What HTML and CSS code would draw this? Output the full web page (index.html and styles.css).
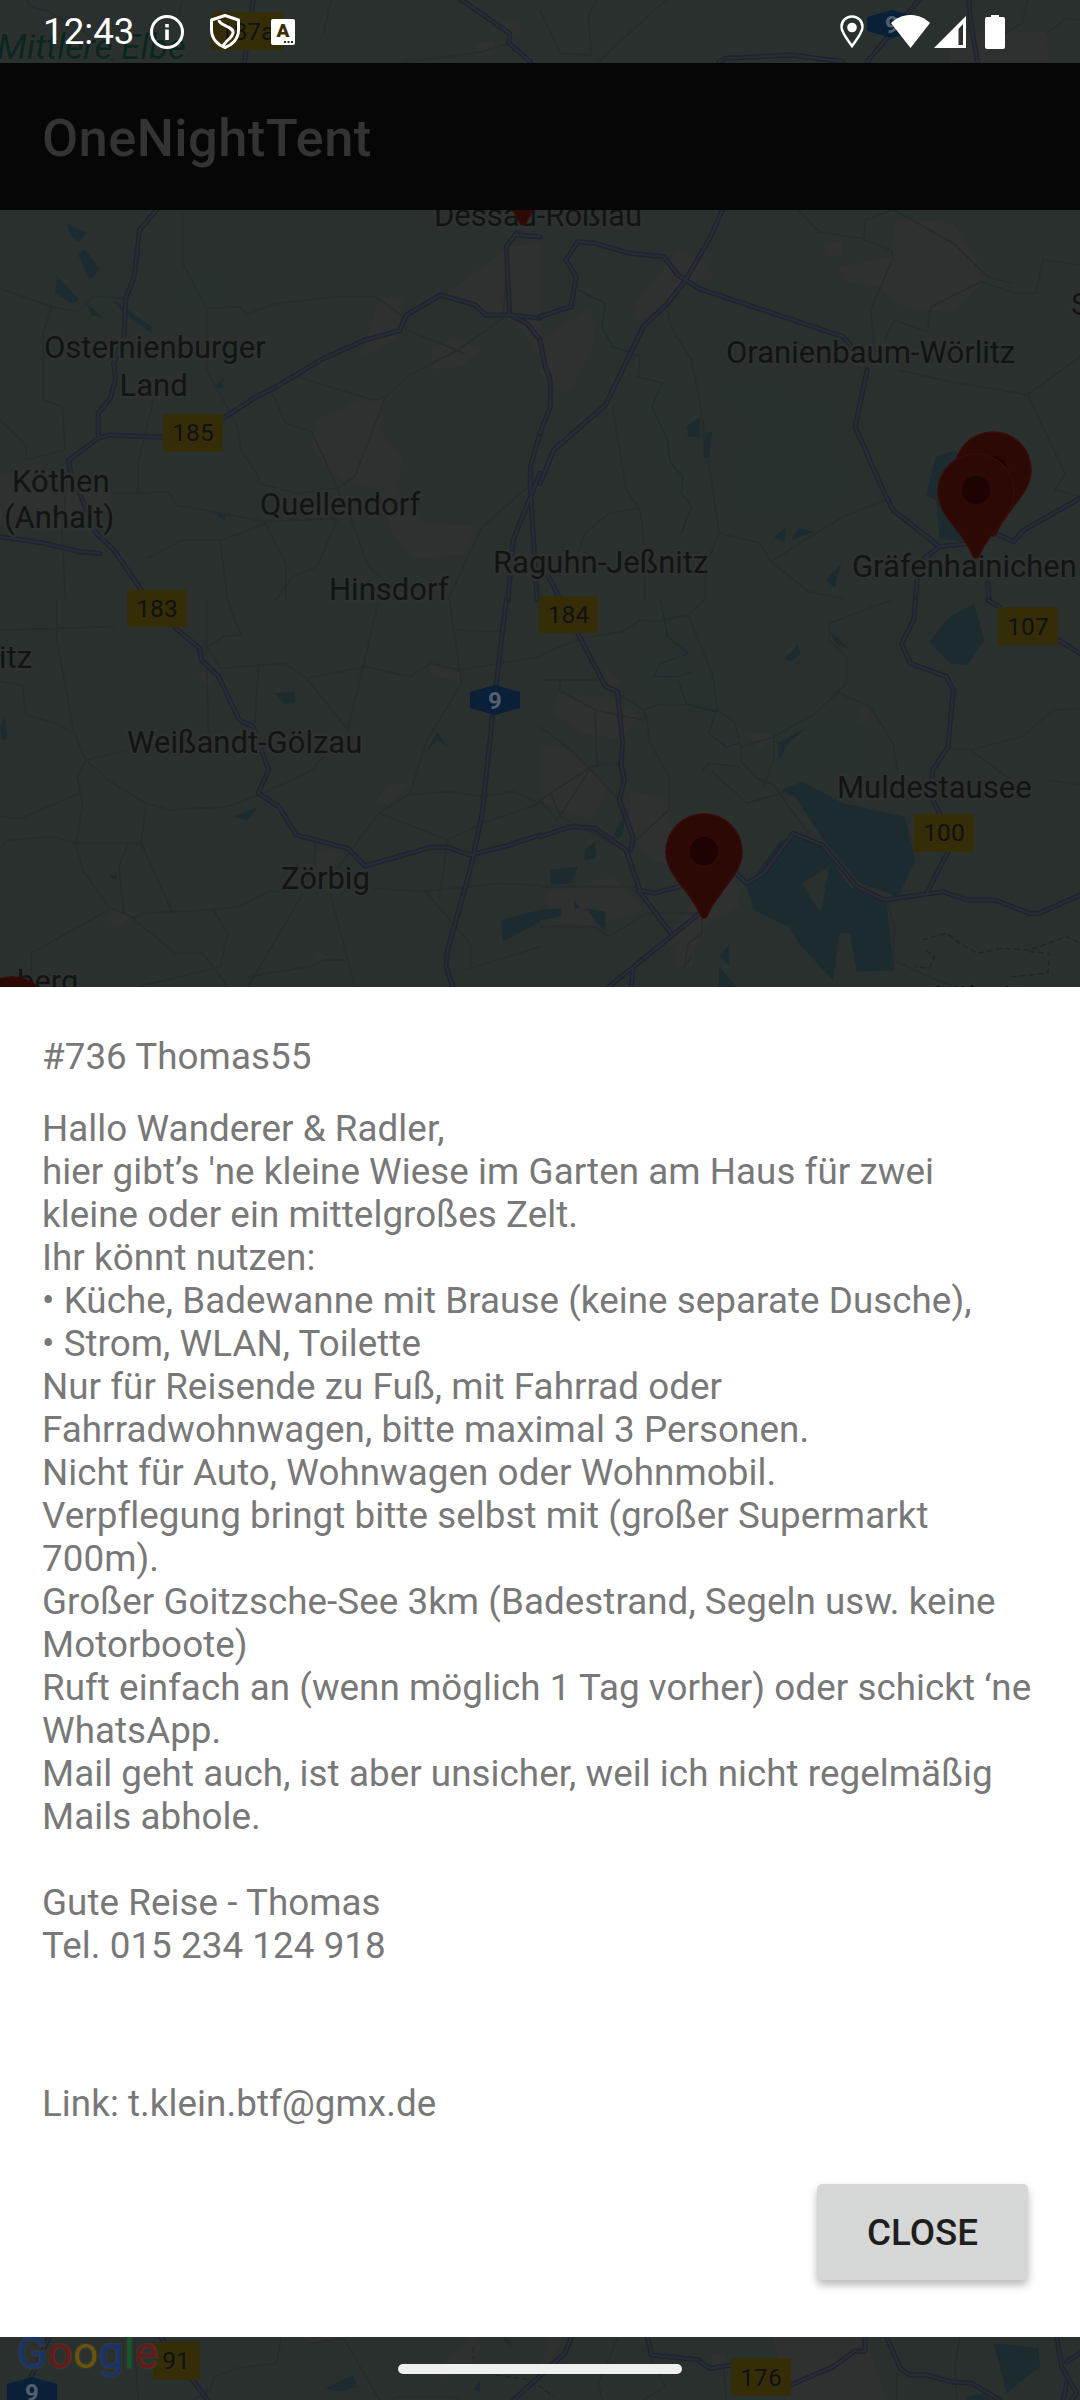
FILE: index.html
```html
<!DOCTYPE html>
<html lang="de">
<head>
<meta charset="utf-8">
<title>OneNightTent</title>
<link rel="stylesheet" href="styles.css">
</head>
<body>
<div class="screen">
<svg class="map" width="1080" height="2400" viewBox="0 0 1080 2400">
<defs>
<path id="pin" d="M0 -38C21 -38 38 -21 38 0C38 18 24 30 12 48C6 56 4 62 3 64Q0 68 -3 64C-4 62 -6 56 -12 48C-24 30 -38 18 -38 0C-38 -21 -21 -38 0 -38Z"/>
<path id="m1" d="M735 0L710 185M1340 0L1480 100L1478 130L1540 185"/>
<path id="m2" d="M1100 0L950 185M520 185L540 175L730 165L880 185M1245 0L1250 60L1270 185"/>
<path id="m3" d="M455 30L405 90L390 230L365 295L360 410L330 490L335 540L320 595L285 640L285 715L200 780L205 815L235 890L280 1000L330 1050L430 1200M475 712L315 705L285 715M648 655L745 590L785 570L860 525L930 480L1060 420L1160 392L1180 345L1280 285L1380 315L1410 345L1480 345L1568 355M1500 100L1470 140L1480 345M1500 105L1568 110M0 1010L130 1030L230 1055L290 1060M1568 820L1490 1020L1475 1200M1568 700L1540 800L1540 870L1560 1200M1480 345L1530 370L1568 420"/>
<path id="m4" d="M0 350L90 320L105 230L75 180L110 125L160 130L260 160L360 170L400 225L460 265L880 410L905 440M530 30L490 120L420 245L370 310L300 380L230 530L190 615L40 750L0 850M0 420L15 500L30 540L30 620L0 700M950 510L915 680L1000 880L1025 930L1160 1040L1290 1025M1375 1025L1405 990L1568 895M1160 1040L1110 1080M1320 1000L1375 1025M20 1120L60 1200M1095 1140L1090 1200M1300 1150L1305 1200"/>
<path id="m5" d="M510 85L580 145L585 180L635 230L695 360L735 380L780 510L750 580L810 620L860 705L1010 745L1060 798L1250 742L1300 742L1365 765L1480 735L1568 705M1470 0L1440 260M1430 350L1400 640L1370 790L1300 1050L1295 1100L1315 1160"/>
<path id="m6" d="M0 710L90 680L160 685L250 750L290 870L330 880L420 855M570 820L600 850L650 820L735 700L820 735L920 860L1000 900L1170 875L1240 900L1320 900L1420 940L1450 940L1568 885M200 1160L380 1010L470 935L520 880M285 870L380 1000M270 1105L265 1160M110 100L190 260L225 275L240 430L235 490L245 540L230 600L270 710L265 750M1090 0L1085 60L1050 130L1075 190L1180 230L1200 270L1185 440L1140 510L1140 600L1160 640M1185 755L1125 875M1300 0L1335 22M1505 120L1568 160"/>
<path id="m7" d="M0 665L30 685L95 675M272 735L400 680L465 632L495 635L495 591M560 591L600 685L630 705L680 705L750 725L815 730L900 780M1070 591L1085 680L1130 760L1115 780M1140 640L1100 665M1100 730L1090 780"/>
<path id="m8" d="M110 171L70 290M360 171L465 360M1280 171L1265 220L1150 360M1450 171L1460 225L1568 240"/>
</defs>
<rect class="base" width="1080" height="2400"/>

<g transform="scale(.34439 .33333)">
<path class="urban" d="M1380 130L1430 120L1450 160L1380 170ZM1460 60L1510 60L1510 110L1470 110Z"/>
<path class="minor" d="M530 0L520 50M1170 185L1300 170L1400 155L1480 130M960 0L940 100"/>
<path class="river" d="M80 0Q90 30 130 30L240 90L330 185"/>
<g class="edge"><use href="#m1"/></g><g class="core"><use href="#m1"/></g>
</g>
<g transform="translate(540 0) scale(.34439 .33333)">
<path class="urban" d="M1190 100L1470 95L1478 185L1190 185Z"/>
<path class="minor" d="M0 30L60 160L150 165L140 50L165 0M170 185L290 70L365 0M1415 0L1400 70L1350 100M1470 100L1530 55L1568 60"/>
<g class="edge"><use href="#m2"/></g><g class="core"><use href="#m2"/></g>
</g>

<g transform="translate(0 200) scale(.34439 .33333)">
<path class="urban" d="M1100 290L1170 300L1150 420L1050 470ZM1250 450L1320 410L1400 450L1340 500L1260 510ZM920 660L1040 600L1110 600L1110 700L1170 780L1150 880L1230 970L1390 980L1350 1060L1200 1080L1140 1000L1100 870L1000 840L950 810L905 740ZM0 830L80 800L300 860L320 920L200 1000L0 960ZM1480 140L1568 130L1568 470L1500 370L1300 280L1400 200Z"/>
<path class="forest" d="M450 270L600 210L650 260L600 320L500 290ZM270 230L340 290L310 390L260 370Z"/>
<path class="water" d="M225 160L250 150L290 210L260 240ZM165 225L230 300L210 310L160 280ZM250 310L300 355L265 345ZM330 300L440 380L440 400L350 330ZM195 70L250 100L230 125L205 110ZM625 560L650 530L645 565ZM625 940L655 945L650 965Z"/>
<path class="minor" d="M0 265L150 320L225 335L270 290L360 295M150 320L125 400L125 600L180 620L190 750L75 780L75 735L0 660M530 30L530 190L600 325L700 320L715 345L800 310L980 290L1090 290L1170 350L1180 390L1350 460M600 325L600 510L690 680L700 750L750 830L750 850L860 880L980 865L1030 830L1120 590L1085 600L860 530M1120 590L1190 525L1330 450L1460 355L1470 240M445 600L400 790L400 880L490 875L510 915L620 935L770 965L880 960L980 955M790 580L830 670L905 695L930 750L980 865L1020 960L1070 1100L1150 1170M770 970L830 1090L830 1200M200 780L180 1000L190 1200M400 880L330 880M640 1020L660 1200M430 1075L530 1020L640 1020L700 1000L770 970M1400 980L1300 1200M1568 830L1400 980M980 955L920 1100L850 1130L800 1200"/>
<g class="edge"><use href="#m3"/></g><g class="core"><use href="#m3"/></g>
</g>

<g transform="translate(540 200) scale(.34439 .33333)">
<path class="forest" d="M490 520L870 600L810 700L880 820L840 940L600 940L560 800L620 680Z"/>
<path class="urban" d="M0 420L150 320L160 430L90 570L60 580L0 520ZM820 130L880 125L875 170L830 170ZM870 200L1020 170L1030 60L1200 70L1300 230L1200 340L1050 320L980 260L880 240ZM270 320L400 150L490 190L500 240L420 240L360 320L280 370Z"/>
<path class="water" d="M1150 770L1210 750L1200 900L1260 1030L1160 1015L1150 900L1120 885ZM680 1010L715 980L710 1030ZM730 1020L750 985L795 995ZM830 1140L875 1090L855 1165ZM425 680L465 650L465 710L430 710ZM475 700L500 695L490 775L475 770Z"/>
<path class="minor" d="M750 30L810 95L930 115L1020 150L1025 175L960 330L970 430M940 115L945 60L1020 30M1030 30L1200 130L1300 230L1370 250M1000 420L1030 360L1125 395L1135 320L1280 245L1380 280L1440 280L1460 180L1568 195M1040 510L1190 545L1340 570L1415 585L1568 470M1415 585L1525 820L1495 870L1568 890M370 330L380 380L440 480L460 580L520 1000L640 1030L670 1085L780 1175L880 1195M520 1000L480 1100L480 1200M670 1085L880 950L1000 900M210 620L250 870L290 930L300 1000L305 1200M290 925L200 940L130 1000L110 1060"/>
<path class="river" d="M110 270L190 310L180 380L210 440L290 470L285 530L355 550L325 620L370 720L380 790L415 830L410 880L440 920L410 1000"/>
<g class="edge"><use href="#m4"/></g><g class="core"><use href="#m4"/></g>
</g>

<g transform="translate(0 600) scale(.34439 .33333)">
<path class="urban" d="M1250 190L1340 220L1330 250L1250 220ZM1080 620L1130 550L1190 550L1150 600ZM900 1050L960 1070L930 1090ZM910 760L980 750L970 810L915 810ZM310 960L340 930L400 940L340 980ZM570 240L600 190L620 260Z"/>
<path class="water" d="M800 280L855 275L855 310L825 310ZM680 650L750 620L720 660ZM1240 450L1270 395L1300 440L1270 420ZM1455 960L1568 930L1568 965L1460 1025ZM0 380L15 350L20 415L5 420ZM320 825L340 825L340 835L322 835Z"/>
<path class="minor" d="M0 90L20 90L330 80M165 0L165 120L215 400L250 480L370 450M0 245L65 255L75 345L160 370L215 400M250 480L225 530L240 620L220 730L240 810L315 920L390 955L415 940L600 930L690 920L780 875L815 875M250 480L320 545L425 610L490 630L660 620L750 585L900 515L940 470M425 610L410 730L220 730L155 710L20 720L0 745M0 650L60 655L230 580M370 735L345 800L360 940M410 730L500 935M315 930L90 1060L90 1160M390 960L510 1060L590 1060L660 1160M640 1100L400 1160M660 1000L640 1100M620 930L665 1010M600 0L600 140L650 110L700 105L660 0M600 140L640 205L825 190L890 235L1060 200L1190 230L1250 190L1335 210L1568 170M1100 0L1010 390L890 235M750 200L740 370M600 200L605 400M1305 0L1340 250L1240 420L1190 580L1100 640L980 805M1310 90L1450 95M1190 585L1300 575L1400 590L1490 575L1568 610M1100 640L1300 720L1400 670L1568 610M1300 720L1275 900M880 880L720 1160M960 885L1030 1160M1085 865L1230 875L1450 850L1568 855M1235 875L1365 1030L1370 1100L1350 1110L1568 1040M720 1130L900 1100L940 1080L1010 1080M915 730L915 800"/>
<g class="edge"><use href="#m5"/></g><g class="core"><use href="#m5"/></g>
</g>

<g transform="translate(540 600) scale(.34439 .33333)">
<path class="urban" d="M50 280L200 290L290 340L240 420L120 400L40 340ZM0 430L90 450L200 560L150 660L30 620L0 600ZM260 570L370 600L400 780L330 790L260 700ZM20 880L210 830L280 900L300 930L160 980L20 960ZM420 790L560 800L580 920L470 980L440 1100L400 1100L380 1000L430 940ZM590 400L680 405L640 450ZM180 190L240 250L200 260ZM925 320L965 330L950 370L925 365ZM700 590L780 660L920 860L1030 880L1000 900L880 850L820 720L740 640Z"/>
<path class="forest" d="M690 350L900 350L960 500L700 550ZM280 150L500 200L520 330L370 320L280 240Z"/>
<path class="water" d="M600 860L700 720L740 710L820 740L900 860L1005 910L1030 1110L920 1115L900 1000L870 1000L850 1140L760 1040L720 980L620 930ZM700 570L760 545L880 610L1060 650L1090 780L1040 890L930 850L830 730L740 590ZM1130 125L1190 50L1260 12L1290 120L1240 195L1190 190ZM710 175L750 135L755 165L725 185ZM840 90L900 150L860 130ZM695 480L690 430L770 385L720 430ZM30 810L110 800L90 850L30 855ZM0 930L60 925L60 950L0 960ZM135 925L190 935L190 990L165 970ZM130 750L160 725L160 775L130 780ZM215 700L245 650L240 705L225 715ZM520 1100L570 1160L520 1160ZM525 1070L550 1030L550 1100ZM100 900L115 925L100 925Z"/>
<path class="base" d="M760 850L840 800L815 940Z"/>
<path class="minor" d="M0 165L120 115L240 95L290 60L330 65L430 45L475 0M430 45L500 220L515 330L565 365L585 440L585 485L630 535L680 555L750 660L780 700M0 240L170 240L300 330L340 315L430 315L515 335M60 240L55 270L160 330L300 360L305 330L320 430L375 530L375 630L280 720M585 440L680 410L800 340L890 250L890 170L840 120L840 70L930 35L1020 0M860 275L960 320L1025 430L1040 520M680 410L680 470L650 560M160 330L165 490L225 490L240 560M0 380L90 450L230 600M0 600L150 500L50 660L0 600M150 500L230 490M0 860L280 860M30 580L60 650L250 750M0 980L160 980L200 1010L310 940L470 940M470 940L470 1000L430 1030L420 1100L440 1070M1190 445L1250 450L1400 410L1490 330L1568 325M1250 450L1420 580M1480 540L1568 555M1005 900L1030 980L1025 1080L1130 1130L1200 1160"/>
<path class="river" d="M350 0L370 110L430 160L350 190L330 230L400 230L440 215M400 240L425 310L510 335L490 400L540 440L580 430M470 515L490 490L580 500M500 515L570 580L600 610L700 580L760 550"/>
<path class="border" d="M1110 1020L1180 1000L1220 1030L1270 1060L1340 1045L1420 1050L1530 1010L1568 1030M1120 1050L1145 1070L1130 1105L1090 1100M1420 1055L1480 1060L1475 1120L1370 1130"/>
<g class="edge"><use href="#m6"/></g><g class="core"><use href="#m6"/></g>
</g>

<g transform="translate(0 2280) scale(.44643 .33333)">
<path class="urban" d="M1000 240L1060 171L1080 200L1060 250L980 300ZM1230 171L1270 171L1200 300ZM670 171L770 171L700 190Z"/>
<path class="water" d="M730 325L790 285L800 320L760 335ZM1125 175L1140 175L1145 200ZM1060 330L1075 300L1075 335Z"/>
<path class="minor" d="M630 171L620 250L530 265L480 290L470 330L430 360M695 190L770 175L850 360M880 360L890 350L1020 350L1030 360M1385 171L1340 310L1350 360M1445 200L1490 320L1440 360M300 171L310 360"/>
<path class="border" d="M1060 200L1060 240M1110 285L1190 300L1240 350"/>
<g class="edge"><use href="#m8"/></g><g class="core"><use href="#m8"/></g>
</g>
<g transform="translate(700 2140) scale(.33333)">
<path class="urban" d="M220 591L500 591L560 780L260 780ZM35 640L80 640L80 680L35 680Z"/>
<path class="water" d="M880 610L1015 625L1020 680L920 760L900 680ZM800 770L850 760L880 780L800 780Z"/>
<path class="minor" d="M70 680L80 780M590 700L590 780M780 591L765 680L770 780"/>
<g class="edge"><use href="#m7"/></g><g class="core"><use href="#m7"/></g>
</g>

<text class="reserve" x="-3" y="59">Mittlere Elbe</text>
<text class="lbl" x="44" y="358">Osternienburger</text>
<text class="lbl" x="119.5" y="396">Land</text>
<text class="lbl" x="12" y="492">Köthen</text>
<text class="lbl" x="4" y="528">(Anhalt)</text>
<text class="lbl" x="260" y="515">Quellendorf</text>
<text class="lbl" x="329" y="600">Hinsdorf</text>
<text class="lbl" x="493" y="573">Raguhn-Jeßnitz</text>
<text class="lbl" x="434" y="226">Dessau-Roßlau</text>
<text class="lbl" x="726" y="363">Oranienbaum-Wörlitz</text>
<text class="lbl" x="852" y="577">Gräfenhainichen</text>
<text class="lbl" x="1071" y="315">S</text>
<text class="lbl" x="-1" y="668">itz</text>
<text class="lbl" x="127" y="753">Weißandt-Gölzau</text>
<text class="lbl" x="281" y="889">Zörbig</text>
<text class="lbl" x="17" y="992">berg</text>
<text class="lbl" x="837" y="798">Muldestausee</text>
<text class="lbl" x="934" y="1008">Löbnitz</text>

<g class="shield"><rect x="211" y="12" width="72" height="38"/><text x="247" y="40">187a</text></g>
<g class="shield"><rect x="163" y="414" width="60" height="38"/><text x="193" y="441">185</text></g>
<g class="shield"><rect x="127" y="590" width="60" height="37"/><text x="157" y="617">183</text></g>
<g class="shield"><rect x="539" y="596" width="59" height="37"/><text x="568.5" y="623">184</text></g>
<g class="shield"><rect x="998" y="607" width="60" height="38"/><text x="1028" y="635">107</text></g>
<g class="shield"><rect x="914" y="814" width="60" height="38"/><text x="944" y="841">100</text></g>
<g class="shield"><rect x="731" y="2358" width="60" height="38"/><text x="761" y="2386">176</text></g>
<g class="shield"><rect x="153" y="2342" width="47" height="38"/><text x="176" y="2369">91</text></g>

<g class="auto"><path d="M470 692L495 685L520 692V708L495 715L470 708Z"/><text x="495" y="709">9</text></g>
<g class="auto"><path d="M867 17L892 10L917 17V31L892 38L867 31Z"/><text x="892" y="33">9</text></g>
<g class="auto"><path d="M7 2384L32 2377L57 2384V2408H7Z"/><text x="32" y="2401">9</text></g>

<text class="google" x="17" y="2368"><tspan class="g-blue">G</tspan><tspan class="g-red">o</tspan><tspan class="g-yellow">o</tspan><tspan class="g-blue">g</tspan><tspan class="g-green">l</tspan><tspan class="g-red">e</tspan></text>

<g class="marker"><use href="#pin" x="523" y="159"/></g>
<g class="marker"><use href="#pin" x="12" y="1015"/></g>
<g class="marker"><use href="#pin" x="993" y="470"/><circle class="hole" cx="993" cy="470" r="14"/></g>
<g class="marker"><use href="#pin" x="976" y="492"/><circle class="hole" cx="976" cy="490" r="14"/></g>
<g class="marker"><use href="#pin" x="704" y="852"/><circle class="hole" cx="704" cy="851" r="14"/></g>
</svg>

<div class="page">
  <div class="statusbar">
    <div class="status-left">
      <span class="clock">12:43</span>
      <svg class="ic-info" width="34" height="34" viewBox="0 0 34 34"><circle cx="17" cy="17" r="15.5" fill="none" stroke="#fff" stroke-width="3"/><rect x="15.2" y="14.5" width="3.6" height="10.5" fill="#fff"/><rect x="15.2" y="9" width="3.6" height="3.4" fill="#fff"/></svg>
      <svg class="ic-shield" width="30" height="35" viewBox="0 0 30 35"><path d="M15 1.5L28.5 6V16C28.5 25 22 31 15 33.5C8 31 1.5 25 1.5 16V6Z" fill="none" stroke="#fff" stroke-width="3" stroke-linejoin="round"/><path d="M9 6C9 12 24 12 23 19C22 25 14 27 13 33" fill="none" stroke="#fff" stroke-width="3"/></svg>
      <svg class="ic-note" width="24" height="26" viewBox="0 0 24 26"><rect width="24" height="26" rx="2" fill="#fff"/><text class="ic-note-a" x="12" y="18">A</text><rect x="13" y="22" width="2" height="2" fill="#3a2d05"/><rect x="16.5" y="22" width="2" height="2" fill="#3a2d05"/><rect x="20" y="22" width="2" height="2" fill="#3a2d05"/></svg>
    </div>
    <div class="status-right">
      <svg class="ic-loc" width="24" height="33" viewBox="0 0 24 33"><path d="M12 1.5C5.5 1.5 1.5 6.5 1.5 12C1.5 18 8 25 12 31C16 25 22.5 18 22.5 12C22.5 6.5 18.5 1.5 12 1.5Z" fill="none" stroke="#fff" stroke-width="2.5"/><circle cx="12" cy="12.5" r="4.8" fill="#fff"/></svg>
      <svg class="ic-wifi" width="39" height="33" viewBox="0 0 39 33"><path d="M0 8C11 -2.7 28 -2.7 39 8L19.5 33Z" fill="#fff"/></svg>
      <svg class="ic-signal" width="32" height="32" viewBox="0 0 32 32"><path fill-rule="evenodd" d="M32 0V32H0ZM24.5 13V29H29V8Z" fill="#fff"/></svg>
      <svg class="ic-batt" width="20" height="34" viewBox="0 0 20 34"><path d="M6 0H14V2H18Q20 2 20 4V32Q20 34 18 34H2Q0 34 0 32V4Q0 2 2 2H6Z" fill="#fff"/></svg>
    </div>
  </div>
  <header class="appbar"><h1 class="app-title">OneNightTent</h1></header>
  <div class="map-gap"></div>
  <section class="dialog">
    <p class="dlg-title">#736 Thomas55</p>
    <p class="dlg-body">Hallo Wanderer &amp; Radler,
hier gibt’s 'ne kleine Wiese im Garten am Haus für zwei kleine oder ein mittelgroßes Zelt.
Ihr könnt nutzen:
• Küche, Badewanne mit Brause (keine separate Dusche),
• Strom, WLAN, Toilette
Nur für Reisende zu Fuß, mit Fahrrad oder Fahrradwohnwagen, bitte maximal 3 Personen.
Nicht für Auto, Wohnwagen oder Wohnmobil.
Verpflegung bringt bitte selbst mit (großer Supermarkt 700m).
Großer Goitzsche-See 3km (Badestrand, Segeln usw. keine Motorboote)
Ruft einfach an (wenn möglich 1 Tag vorher) oder schickt ‘ne WhatsApp.
Mail geht auch, ist aber unsicher, weil ich nicht regelmäßig Mails abhole.

Gute Reise - Thomas
Tel. 015 234 124 918</p>
    <p class="dlg-link">Link: t.klein.btf@gmx.de</p>
    <div class="dlg-actions"><button class="btn-close" type="button">Close</button></div>
  </section>
  <div class="navzone"><div class="homebar"></div></div>
</div>
</div>
</body>
</html>
```

FILE: styles.css
```css
html, body { margin: 0; padding: 0; }
body { font-family: Roboto, "Liberation Sans", sans-serif; background: #2a302d; }
.screen { position: relative; width: 1080px; height: 2400px; overflow: hidden; }

/* map canvas */
.map { position: absolute; left: 0; top: 0; display: block; }
.map path { vector-effect: non-scaling-stroke; }
.base { fill: #2a302d; }
.urban { fill: #2f3130; }
.forest { fill: #28312d; }
.water { fill: #1c2b30; }
.minor { fill: none; stroke: #262b2d; stroke-width: 1.6; stroke-linejoin: round; }
.river { fill: none; stroke: #1e2c31; stroke-width: 1.4; }
.border { fill: none; stroke: #1e2628; stroke-width: 1.4; stroke-dasharray: 6 3; }
.edge { fill: none; stroke: #1f232c; stroke-width: 5; stroke-linejoin: round; stroke-linecap: round; }
.core { fill: none; stroke: #282c39; stroke-width: 2.4; stroke-linejoin: round; stroke-linecap: round; }
.lbl { font-family: Roboto, sans-serif; font-size: 31px; fill: #121414; stroke: #2d312f; stroke-width: 5px; paint-order: stroke; }
.reserve { font-family: Roboto, sans-serif; font-style: italic; font-size: 35px; fill: #0a2620; stroke: #2d312f; stroke-width: 4px; paint-order: stroke; }
.shield rect { fill: #352d08; }
.shield text { font-family: Roboto, sans-serif; font-size: 24.5px; fill: #111; text-anchor: middle; }
.auto path { fill: #0a2038; }
.auto text { font-family: Roboto, sans-serif; font-weight: 700; font-size: 24px; fill: #525f6e; text-anchor: middle; }
.google { font-family: Roboto, sans-serif; font-size: 44px; letter-spacing: .5px; stroke: #323633; stroke-width: 3px; paint-order: stroke; }
.g-blue { fill: #17346e; }
.g-red { fill: #6a1a14; }
.g-yellow { fill: #6a540a; }
.g-green { fill: #12592a; }
.marker use { fill: #2c0905; stroke: #380b06; stroke-width: 1.5; }
.hole { fill: #1f0202; }

/* foreground */
.page { position: relative; display: flex; flex-direction: column; height: 2400px; }
.statusbar { display: flex; justify-content: space-between; align-items: center; height: 63px; box-sizing: border-box; padding: 0 75px 0 43px; flex: none; }
.status-left, .status-right { display: flex; align-items: center; }
.clock { font-size: 36.75px; color: #fff; line-height: 63px; }
.ic-info { margin-left: 15px; }
.ic-shield { margin-left: 26px; }
.ic-note { margin-left: 31px; }
.ic-wifi { margin-left: 27px; }
.ic-signal { margin-left: 4px; }
.ic-batt { margin-left: 19px; }
.status-left svg, .status-right svg { display: block; }
.ic-note-a { font-family: Roboto, sans-serif; font-weight: 900; font-size: 19px; fill: #3a2d05; text-anchor: middle; }

.appbar { flex: none; height: 147px; box-sizing: border-box; background: #060606; display: flex; align-items: center; padding: 3px 0 0 42px; }
.app-title { margin: 0; font-size: 52.5px; font-weight: 500; letter-spacing: .39px; color: #333; line-height: 1; }
.map-gap { flex: none; height: 777px; }

.dialog { flex: none; height: 1350px; box-sizing: border-box; background: #fff; padding: 48px 46px 0 42px; color: #787878; font-size: 36.75px; line-height: 43px; letter-spacing: .06px; }
.dialog p { margin: 0; }
.dlg-title { margin-bottom: 29px !important; }
.dlg-body { white-space: pre-line; padding-bottom: 86px; margin-bottom: 29px !important; }
.dlg-actions { display: flex; justify-content: flex-end; margin: 59px 6px 0 0; }
.btn-close { width: 211px; height: 96px; border: 0; border-radius: 5px; background: #d6d7d7; color: #1e1e1e; font: 500 36.75px Roboto, sans-serif; text-transform: uppercase; box-shadow: 0 5px 8px rgba(0,0,0,.28); padding: 0; }

.navzone { flex: none; height: 63px; display: flex; justify-content: center; padding-top: 27px; box-sizing: border-box; }
.homebar { width: 284px; height: 10px; border-radius: 5px; background: #eeefee; }
```
